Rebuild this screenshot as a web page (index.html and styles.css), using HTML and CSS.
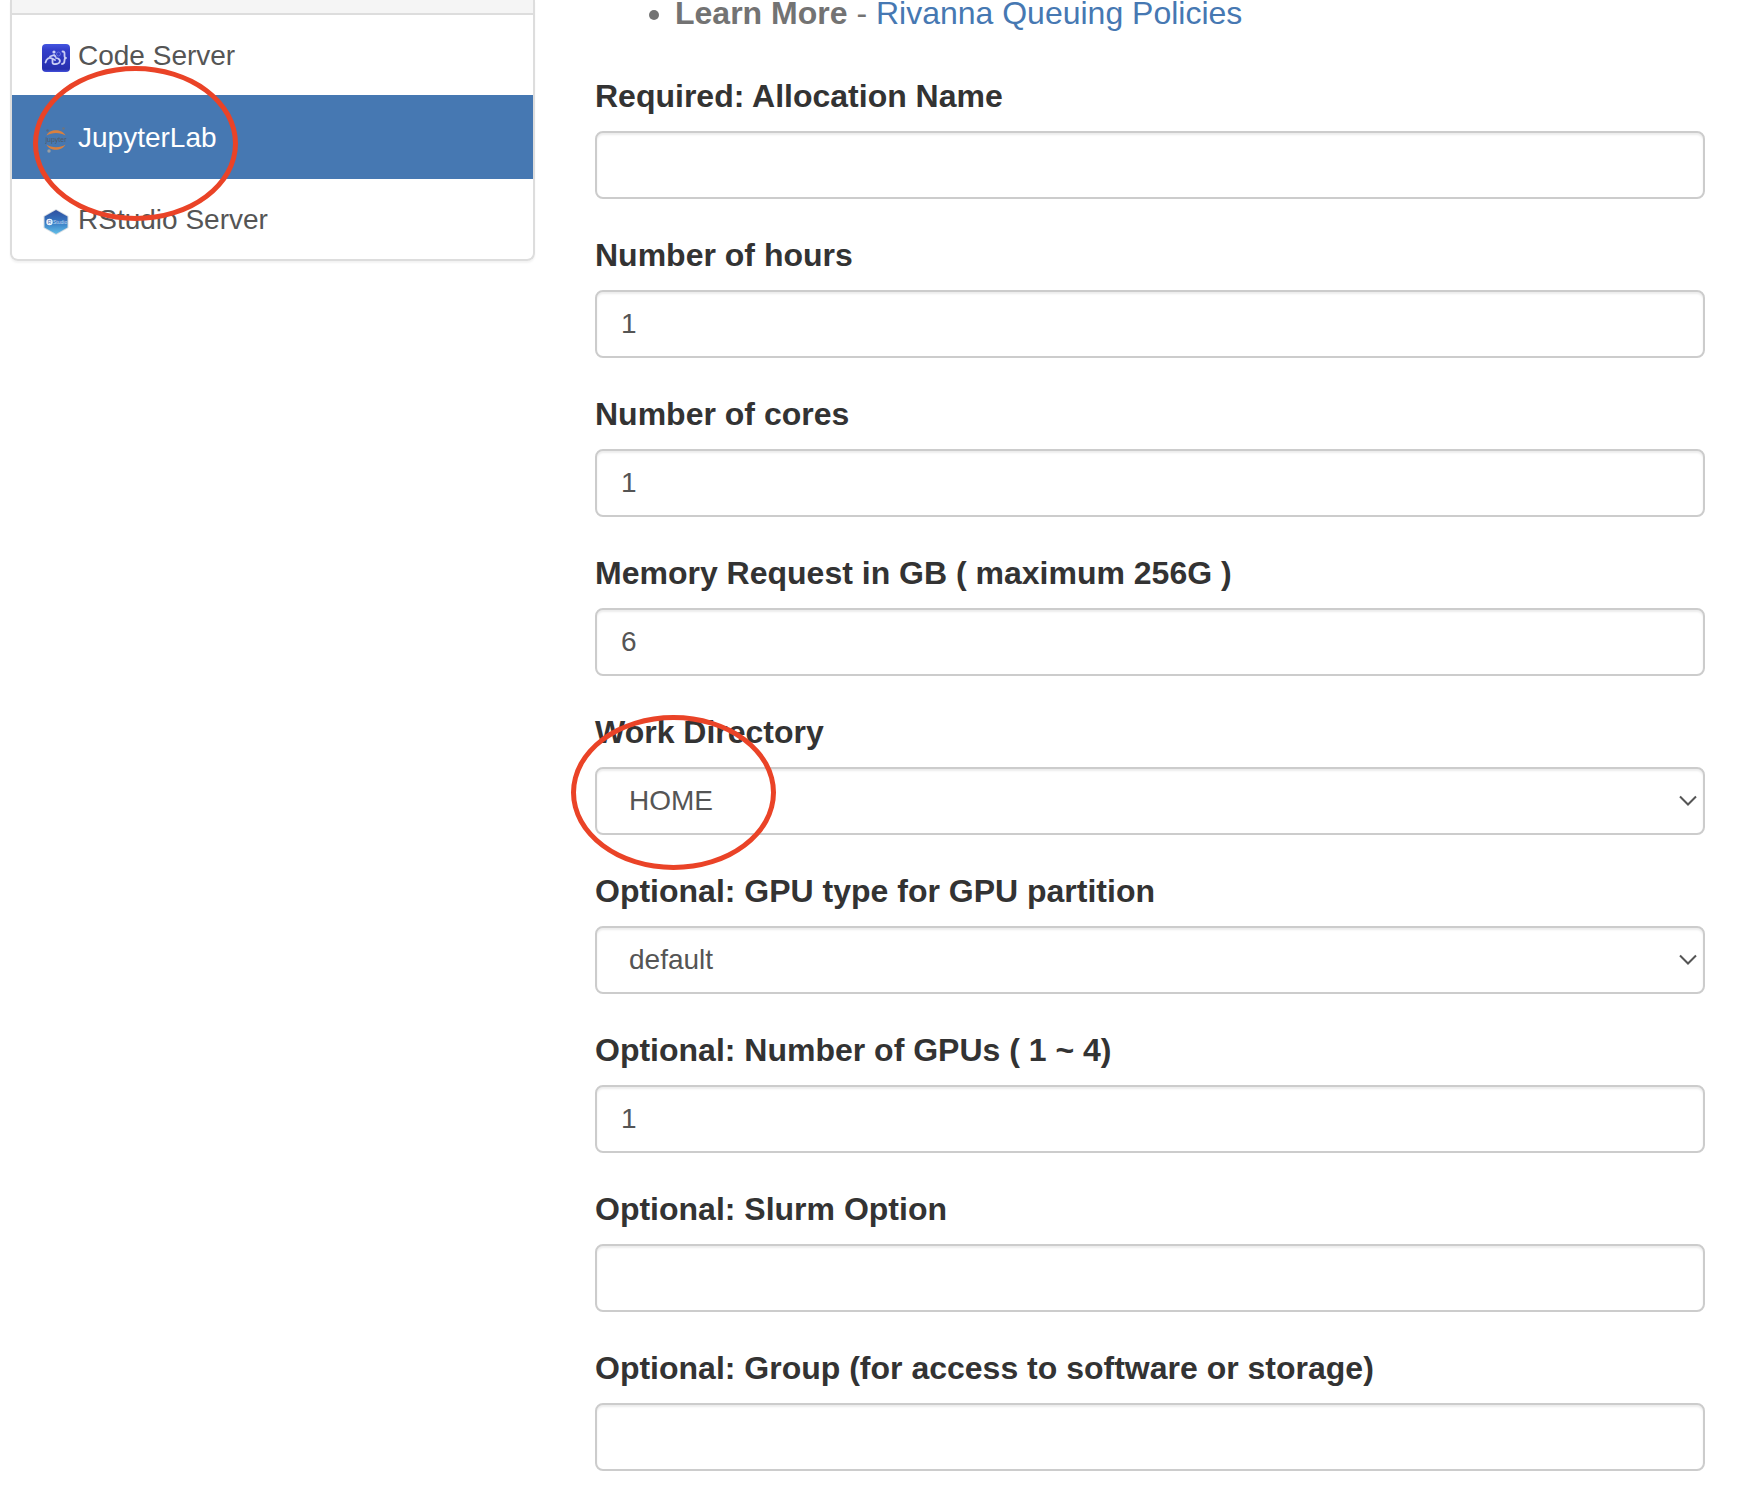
FILE: index.html
```html
<!DOCTYPE html>
<html lang="en">
<head>
  <meta charset="utf-8">
  <meta name="viewport" content="width=device-width, initial-scale=1">
  <title>JupyterLab</title>
  <link rel="stylesheet" href="styles.css">
</head>
<body>
  <div class="page">
    <nav class="sidebar" aria-label="Interactive apps">
      <div class="sidebar-heading"></div>
      <ul class="app-list">
        <li class="app-item">
          <a class="app-link" href="#code-server">
            <svg class="app-icon" viewBox="0 0 28 28" aria-hidden="true">
              <defs>
                <linearGradient id="code-bg" x1="0" y1="0" x2="0" y2="1">
                  <stop offset="0" stop-color="#4355e0"/>
                  <stop offset="0.2" stop-color="#343fcb"/>
                  <stop offset="0.9" stop-color="#262fae"/>
                  <stop offset="1" stop-color="#4450dc"/>
                </linearGradient>
              </defs>
              <rect width="28" height="28" rx="4" fill="url(#code-bg)"/>
              <g fill="none" stroke="#c9cdf5" stroke-width="1.800" stroke-linecap="round" stroke-linejoin="round">
                <path d="M3.500 18.500C4.500 14.500 7 13 10 14.500L13 16"/>
                <path d="M8 12.500L12 11L13.500 12.500"/>
                <path d="M10.500 15.500V18.500C10.500 20 12 20.200 14 20C18.500 19.500 19 16 16 14.500L14 14"/>
                <path d="M20.500 7.500C23 7.500 22.500 9.500 22.500 11.500C22.500 13 23 14 24 14C23 14 22.500 15 22.500 16.500C22.500 18.500 22.500 20 20 20"/>
              </g>
              <circle cx="12" cy="8" r="1.600" fill="#c9cdf5"/>
              <circle cx="16.500" cy="10" r="2" fill="none" stroke="#6570de"/>
            </svg>
            <span>Code Server</span>
          </a>
        </li>
        <li class="app-item">
          <a class="app-link active" href="#jupyterlab" aria-current="page">
            <svg class="app-icon" viewBox="0 0 28 28" aria-hidden="true">
              <path d="M4.500 9.500C7.500 2.500 20 2.500 23.500 9.500C18.500 6 9.500 6 4.500 9.500Z" fill="#d9803f"/>
              <path d="M4.500 18.500C7.500 25.500 20 25.500 23.500 18.500C18.500 22 9.500 22 4.500 18.500Z" fill="#d9803f"/>
              <circle cx="5.500" cy="4.500" r="1.200" fill="#57697f"/>
              <circle cx="21.500" cy="2.500" r="1.300" fill="#6c7480"/>
              <circle cx="7" cy="25" r="1.700" fill="#9b9ea2"/>
              <text class="jupyter-word" x="14" y="16" text-anchor="middle">jupyter</text>
            </svg>
            <span>JupyterLab</span>
          </a>
          <span class="highlight highlight-app"></span>
        </li>
        <li class="app-item">
          <a class="app-link" href="#rstudio-server">
            <svg class="app-icon" viewBox="0 0 28 28" aria-hidden="true">
              <defs>
                <linearGradient id="rstudio-bg" x1="0" y1="0" x2="0" y2="1">
                  <stop offset="0" stop-color="#304f9f"/>
                  <stop offset="0.5" stop-color="#3577c2"/>
                  <stop offset="1" stop-color="#62bfe8"/>
                </linearGradient>
              </defs>
              <path d="M14 1L26.500 8V20L14 27L1.500 20V8Z" fill="#d9dde2"/>
              <path d="M14 2L25.500 8.500V19.500L14 26L2.500 19.500V8.500Z" fill="url(#rstudio-bg)"/>
              <circle cx="7.500" cy="14" r="3.200" fill="#eef5fc"/>
              <text class="rstudio-letter" x="7.500" y="16" text-anchor="middle">R</text>
              <text class="rstudio-word" x="11" y="16">Studio</text>
            </svg>
            <span>RStudio Server</span>
          </a>
        </li>
      </ul>
    </nav>

    <main class="content">
      <ul class="notes">
        <li><strong>Learn More</strong> - <a href="#queues">Rivanna Queuing Policies</a></li>
      </ul>

      <form class="launch-form">
        <div class="field">
          <label for="allocation">Required: Allocation Name</label>
          <input class="control" type="text" id="allocation">
        </div>
        <div class="field">
          <label for="hours">Number of hours</label>
          <input class="control" type="text" id="hours" value="1">
        </div>
        <div class="field">
          <label for="cores">Number of cores</label>
          <input class="control" type="text" id="cores" value="1">
        </div>
        <div class="field">
          <label for="memory">Memory Request in GB ( maximum 256G )</label>
          <input class="control" type="text" id="memory" value="6">
        </div>
        <div class="field">
          <label for="workdir">Work Directory</label>
          <div class="select-wrap">
            <select class="control" id="workdir"><option>HOME</option></select>
            <svg class="chevron" viewBox="0 0 18 12" aria-hidden="true"><path d="M1 1.500L9 9.500L17 1.500"/></svg>
          </div>
          <span class="highlight highlight-field"></span>
        </div>
        <div class="field">
          <label for="gpu-type">Optional: GPU type for GPU partition</label>
          <div class="select-wrap">
            <select class="control" id="gpu-type"><option>default</option></select>
            <svg class="chevron" viewBox="0 0 18 12" aria-hidden="true"><path d="M1 1.500L9 9.500L17 1.500"/></svg>
          </div>
        </div>
        <div class="field">
          <label for="gpus">Optional: Number of GPUs ( 1 ~ 4)</label>
          <input class="control" type="text" id="gpus" value="1">
        </div>
        <div class="field">
          <label for="slurm">Optional: Slurm Option</label>
          <input class="control" type="text" id="slurm">
        </div>
        <div class="field">
          <label for="group">Optional: Group (for access to software or storage)</label>
          <input class="control" type="text" id="group">
        </div>
      </form>
    </main>
  </div>
</body>
</html>
```

FILE: styles.css
```css
* {
  box-sizing: border-box;
}

body {
  margin: 0;
  background: #fff;
  color: #333;
  font-family: "Liberation Sans", Arial, Helvetica, sans-serif;
  font-size: 28px;
}

.page {
  display: grid;
  grid-template-columns: minmax(0, 525fr) minmax(0, 1110fr);
  column-gap: 60px;
  align-items: start;
  padding: 0 33px 0 10px;
}

/* Sidebar */
.sidebar {
  border: 2px solid #ddd;
  border-top: 0;
  border-radius: 0 0 8px 8px;
  box-shadow: 0 2px 2px rgba(0, 0, 0, 0.05);
}

.sidebar-heading {
  height: 15px;
  background: #f5f5f5;
  border-bottom: 2px solid #ddd;
}

.app-list {
  margin: 0;
  padding: 0;
  list-style: none;
}

.app-item {
  position: relative;
}

.app-link {
  display: flex;
  align-items: center;
  gap: 8px;
  padding: 21px 30px 19px;
  color: #555;
  line-height: 40px;
  text-decoration: none;
}

.app-link.active {
  padding: 23px 30px 21px;
  background: #4678b2;
  color: #fff;
}

.app-icon {
  flex: none;
  width: 28px;
  height: 28px;
  margin-top: 4px;
}

.jupyter-word {
  font-size: 7px;
  fill: #4e5968;
}

.rstudio-letter {
  font-size: 5px;
  fill: #3c6fb5;
}

.rstudio-word {
  font-size: 5px;
  fill: #c5dcf2;
}

/* Notes above the form */
.notes {
  margin: 0 0 47px;
  padding-left: 80px;
  color: #737373;
  font-size: 32px;
  line-height: 26px;
}

.notes a {
  color: #4678b2;
  text-decoration: none;
}

/* Form */
.launch-form {
  display: grid;
  row-gap: 33px;
}

.field {
  position: relative;
  display: grid;
  row-gap: 12px;
}

.field label {
  font-size: 32px;
  font-weight: bold;
  line-height: 46px;
}

.control {
  display: block;
  width: 100%;
  height: 68px;
  margin: 0;
  padding: 12px 24px;
  border: 2px solid #ccc;
  border-radius: 8px;
  background: #fff;
  box-shadow: inset 0 2px 2px rgba(0, 0, 0, 0.075);
  color: #555;
  font: inherit;
  line-height: 40px;
  appearance: none;
}

select.control {
  padding-left: 32px;
}

.select-wrap {
  position: relative;
}

.chevron {
  position: absolute;
  top: 28px;
  right: 8px;
  width: 18px;
  height: 12px;
  fill: none;
  stroke: #555;
  stroke-width: 2;
  pointer-events: none;
}

/* Callout rings drawn over the controls */
.highlight {
  position: absolute;
  z-index: 2;
  width: 205px;
  height: 155px;
  border: 5px solid #ea4327;
  border-radius: 50%;
  pointer-events: none;
}

.highlight-app {
  top: -29px;
  left: 21px;
}

.highlight-field {
  top: 6px;
  left: -24px;
}
```
